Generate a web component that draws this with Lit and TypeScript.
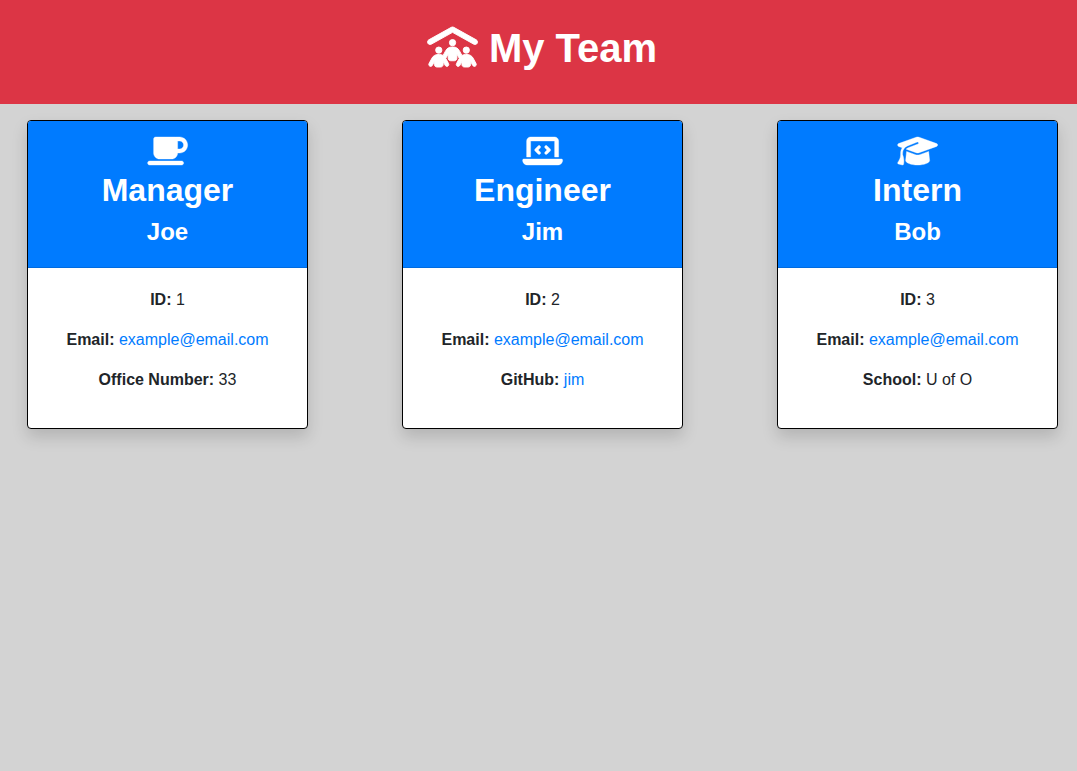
import { LitElement, html, css, svg } from "lit";
import { customElement, property } from "lit/decorators.js";

const ICONS: Record<string, string> = {
  team: "M335.5 4l288 160c15.4 8.6 21 28.1 12.4 43.5s-28.1 21-43.5 12.4L320 68.6 47.5 220c-15.4 8.6-34.9 3-43.5-12.4s-3-34.9 12.4-43.5L304.5 4c9.7-5.4 21.4-5.4 31.1 0zM320 160a40 40 0 1 1 0 80 40 40 0 1 1 0-80zM144 256a40 40 0 1 1 0 80 40 40 0 1 1 0-80zm312 40a40 40 0 1 1 80 0 40 40 0 1 1 -80 0zM226.9 491.4L200 441.5V480c0 17.7-14.3 32-32 32H120c-17.7 0-32-14.3-32-32V441.5L61.1 491.4c-6.3 11.7-20.8 16-32.5 9.8s-16-20.8-9.8-32.5l37.9-70.3c15.3-28.5 45.1-46.3 77.5-46.3h19.5c16.3 0 31.9 4.5 45.4 12.6l33.6-62.3c15.3-28.5 45.1-46.3 77.5-46.3h19.5c32.4 0 62.1 17.8 77.5 46.3l33.6 62.3c13.5-8.1 29.1-12.6 45.4-12.6h19.5c32.4 0 62.1 17.8 77.5 46.3l37.9 70.3c6.3 11.7 1.9 26.2-9.8 32.5s-26.2 1.9-32.5-9.8L552 441.5V480c0 17.7-14.3 32-32 32H472c-17.7 0-32-14.3-32-32V441.5l-26.9 49.9c-6.3 11.7-20.8 16-32.5 9.8s-16-20.8-9.8-32.5l36.3-67.5c-1.7-1.7-3.2-3.6-4.3-5.8L376 345.5V400c0 17.7-14.3 32-32 32H296c-17.7 0-32-14.3-32-32V345.5l-26.9 49.9c-1.2 2.2-2.6 4.1-4.3 5.8l36.3 67.5c6.3 11.7 1.9 26.2-9.8 32.5s-26.2 1.9-32.5-9.8z",
  mug: "M96 64c0-17.7 14.3-32 32-32H448h64c70.7 0 128 57.3 128 128s-57.3 128-128 128H480c0 53-43 96-96 96H192c-53 0-96-43-96-96V64zM480 224h32c35.3 0 64-28.7 64-64s-28.7-64-64-64H480V224zM32 416H544c17.7 0 32 14.3 32 32s-14.3 32-32 32H32c-17.7 0-32-14.3-32-32s14.3-32 32-32z",
  laptop: "M64 96c0-35.3 28.7-64 64-64H512c35.3 0 64 28.7 64 64V352H512V96H128V352H64V96zM0 403.2C0 392.6 8.6 384 19.2 384H620.8c10.6 0 19.2 8.6 19.2 19.2c0 42.4-34.4 76.8-76.8 76.8H76.8C34.4 480 0 445.6 0 403.2zM281 209l-31 31 31 31c9.4 9.4 9.4 24.6 0 33.9s-24.6 9.4-33.9 0l-48-48c-9.4-9.4-9.4-24.6 0-33.9l48-48c9.4-9.4 24.6-9.4 33.9 0s9.4 24.6 0 33.9zM393 175l48 48c9.4 9.4 9.4 24.6 0 33.9l-48 48c-9.4 9.4-24.6 9.4-33.9 0s-9.4-24.6 0-33.9l31-31-31-31c-9.4-9.4-9.4-24.6 0-33.9s24.6-9.4 33.9 0z",
  cap: "M320 32c-8.1 0-16.1 1.4-23.7 4.1L15.8 137.4C6.3 140.9 0 149.9 0 160s6.3 19.1 15.8 22.6l57.9 20.9C57.3 229.3 48 259.8 48 291.9v28.1c0 28.4-10.8 57.7-22.3 80.8c-6.5 13-13.9 25.8-22.5 37.6C0 442.7-.9 448.3 .9 453.4s6 8.9 11.2 10.2l64 16c4.2 1.1 8.7 .3 12.4-2s6.3-6.1 7.1-10.4c8.6-42.8 4.3-81.2-2.1-108.7C90.3 344.3 86 329.8 80 316.5V291.9c0-30.2 10.2-58.7 27.9-81.5c12.9-15.5 29.6-28 49.2-35.7l157-61.7c8.2-3.2 17.5 .8 20.7 9s-.8 17.5-9 20.7l-157 61.7c-12.4 4.9-23.3 12.4-32.2 21.6l159.6 57.6c7.6 2.7 15.6 4.1 23.7 4.1s16.1-1.4 23.7-4.1L624.2 182.6c9.5-3.4 15.8-12.5 15.8-22.6s-6.3-19.1-15.8-22.6L343.7 36.1C336.1 33.4 328.1 32 320 32zM128 408c0 35.3 86 72 192 72s192-36.7 192-72L496.7 262.6 354.5 314c-11.1 4-22.8 6-34.5 6s-23.5-2-34.5-6L143.3 262.6 128 408z",
};

const icon = (name: string) => html`<svg class="icon" viewBox="6 0 640 512" aria-hidden="true">${svg`<path d=${ICONS[name]}></path>`}</svg>`;

const iconStyles = css`
  .icon {
    display: inline-block;
    width: 1.25em;
    height: 1em;
    vertical-align: -0.125em;
    overflow: visible;
    fill: currentColor;
    stroke: currentColor;
    stroke-width: 6;
  }
`;

interface Member {
  role: string;
  icon: string;
  name: string;
  id: number;
  email: string;
  label: string;
  value: string;
  href?: string;
}

const MEMBERS: Member[] = [
  { role: "Manager", icon: "mug", name: "Joe", id: 1, email: "example@email.com", label: "Office Number:", value: "33" },
  { role: "Engineer", icon: "laptop", name: "Jim", id: 2, email: "example@email.com", label: "GitHub:", value: "jim", href: "https://github.com/jim" },
  { role: "Intern", icon: "cap", name: "Bob", id: 3, email: "example@email.com", label: "School:", value: "U of O" },
];

@customElement("member-card")
export class MemberCard extends LitElement {
  @property({ attribute: false }) member!: Member;

  static styles = [
    iconStyles,
    css`
      :host {
        display: block;
        box-sizing: border-box;
        border: 1px solid #000;
        border-radius: 4px;
        background: #fff;
        box-shadow: 0 8px 16px rgba(0, 0, 0, 0.15);
        text-align: center;
      }
      .head {
        padding: 12px 20px;
        background: #007bff;
        color: #fff;
        border-bottom: 1px solid rgba(0, 0, 0, 0.125);
        border-radius: 3px 3px 0 0;
      }
      .role,
      .name {
        margin: 0 0 8px;
        font-weight: 700;
        line-height: 1.2;
      }
      .role {
        font-size: 32px;
      }
      .name {
        font-size: 24px;
      }
      .body {
        padding: 20px;
      }
      .line {
        margin: 0 0 16px;
      }
      .link {
        color: #007bff;
        text-decoration: none;
      }
    `,
  ];

  render() {
    const m = this.member;
    return html`
      <div class="head">
        <h2 class="role">${icon(m.icon)}<br />${m.role}</h2>
        <h4 class="name">${m.name}</h4>
      </div>
      <div class="body">
        <p class="line"><b>ID:</b> ${m.id}</p>
        <p class="line"><b>Email:</b> <a class="link" href="mailto:${m.email}">${m.email}</a></p>
        <p class="line"><b>${m.label}</b> ${m.href ? html`<a class="link" href=${m.href}>${m.value}</a>` : m.value}</p>
      </div>
    `;
  }
}

@customElement("app-root")
export class AppRoot extends LitElement {
  static styles = [
    iconStyles,
    css`
      :host {
        display: block;
        min-height: 100vh;
        overflow: hidden;
        background: #d3d3d3;
        color: #212529;
        font: 400 16px/1.5 "Liberation Sans", Arial, sans-serif;
      }
      .banner {
        padding: 24px 16px 24px 24px;
        background: #dc3545;
        color: #fff;
        text-align: center;
      }
      .title {
        margin: 0 0 8px;
        font-size: 40px;
        font-weight: 700;
        line-height: 1.2;
      }
      .title .icon {
        stroke-width: 12;
      }
      .team {
        display: grid;
        grid-template-columns: repeat(3, 375px);
        margin: 16px 0 0 -20px;
      }
      .card {
        width: 75%;
        justify-self: center;
      }
    `,
  ];

  render() {
    return html`
      <header class="banner"><h1 class="title">${icon("team")} My Team</h1></header>
      <main class="team">${MEMBERS.map((m) => html`<member-card class="card" .member=${m}></member-card>`)}</main>
    `;
  }
}
